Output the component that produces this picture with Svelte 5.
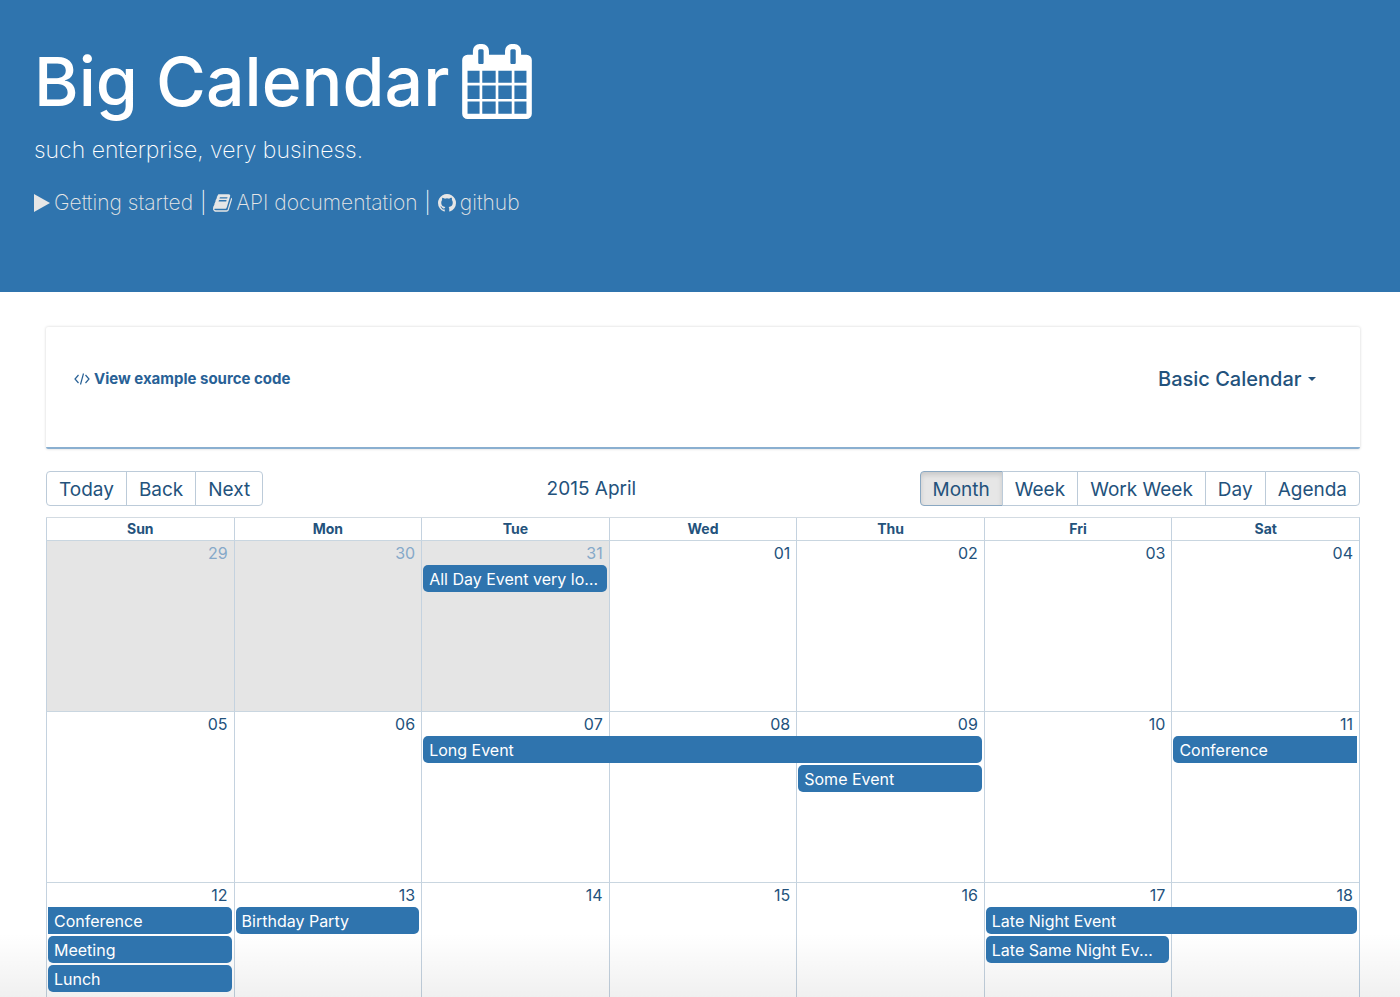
<script>
  const dayNames = ['Sun', 'Mon', 'Tue', 'Wed', 'Thu', 'Fri', 'Sat'];
  const views = ['Month', 'Week', 'Work Week', 'Day', 'Agenda'];
  let view = $state('Month');

  // Each day lists its event slots from the top; null keeps a slot free
  // for an event that runs over from an earlier day.
  const weeks = [
    [
      { date: '29', off: true },
      { date: '30', off: true },
      { date: '31', off: true, slots: [{ title: 'All Day Event very long title', span: 1 }] },
      { date: '01' },
      { date: '02' },
      { date: '03' },
      { date: '04' }
    ],
    [
      { date: '05' },
      { date: '06' },
      { date: '07', slots: [{ title: 'Long Event', span: 3 }] },
      { date: '08' },
      { date: '09', slots: [null, { title: 'Some Event', span: 1 }] },
      { date: '10' },
      { date: '11', slots: [{ title: 'Conference', span: 1, after: true }] }
    ],
    [
      {
        date: '12',
        slots: [
          { title: 'Conference', span: 1, prior: true },
          { title: 'Meeting', span: 1 },
          { title: 'Lunch', span: 1 }
        ],
        more: 2
      },
      { date: '13', slots: [{ title: 'Birthday Party', span: 1 }] },
      { date: '14' },
      { date: '15' },
      { date: '16' },
      {
        date: '17',
        slots: [
          { title: 'Late Night Event', span: 2 },
          { title: 'Late Same Night Event', span: 1 }
        ]
      },
      { date: '18' }
    ]
  ];
</script>

<div class="page">
  <header class="banner">
    <h1>
      Big Calendar
      <svg class="logo" viewBox="64 0 1664 1792" aria-hidden="true"><path d="M192 1664h288v-288h-288v288zM544 1664h320v-288h-320v288zM192 1312h288v-320h-288v320zM544 1312h320v-320h-320v320zM192 928h288v-288h-288v288zM928 1664h320v-288h-320v288zM544 928h320v-288h-320v288zM1312 1664h288v-288h-288v288zM928 1312h320v-320h-320v320zM576 448v-288q0-13-9.500-22.500t-22.500-9.500h-64q-13 0-22.500 9.500t-9.500 22.500v288q0 13 9.500 22.500t22.500 9.500h64q13 0 22.500-9.500t9.500-22.500zM1312 1312h288v-320h-288v320zM928 928h320v-288h-320v288zM1312 928h288v-288h-288v288zM1344 448v-288q0-13-9.500-22.500t-22.500-9.500h-64q-13 0-22.500 9.500t-9.500 22.500v288q0 13 9.500 22.500t22.500 9.500h64q13 0 22.500-9.500t9.500-22.500zM1728 384v1280q0 52-38 90t-90 38h-1408q-52 0-90-38t-38-90v-1280q0-52 38-90t90-38h128v-96q0-66 47-113t113-47h64q66 0 113 47t47 113v96h384v-96q0-66 47-113t113-47h64q66 0 113 47t47 113v96h128q52 0 90 38t38 90z" /></svg>
    </h1>
    <p class="tagline">such enterprise, very business.</p>
    <nav class="links">
      <a href="#getting-started">
        <svg class="play" viewBox="0 0 16 20" aria-hidden="true"><path d="M0 1v18l16-9z" /></svg>
        Getting started
      </a>
      <span class="bar">|</span>
      <a href="#api">
        <svg class="book" viewBox="64 128 1664 1536" aria-hidden="true"><path d="M1703 478q40 57 18 129l-275 906q-19 64-76.500 107.500t-122.500 43.500h-923q-77 0-148.500-53.500t-99.500-131.500q-24-67-2-127 0-4 3-27t4-37q1-8-3-21.500t-3-19.500q2-11 8-21t16.500-23.500 16.500-23.500q23-38 45-91.500t30-91.500q3-10 .5-30t-.5-28q3-11 17-28t17-23q21-36 42-92t25-90q1-9-2.500-32t.5-28q4-13 22-30.500t22-22.500q19-26 42.500-84.500t27.500-96.500q1-8-3-25.500t-2-26.500q2-8 9-18t18-23 17-21q8-12 16.500-30.500t15-35 16-36 19.500-32 26.500-23.500 36-11.500 47.500 5.500l-1 3q38-9 51-9h761q74 0 114 56t18 130l-274 906q-36 119-71.500 153.500t-128.500 34.500h-869q-27 0-38 15-11 16-1 43 24 70 144 70h923q29 0 56-15.500t35-41.500l300-987q7-22 5-57 38 15 59 43zm-1064 2q-4 13 2 22.500t20 9.500h608q13 0 25.500-9.500t16.500-22.500l21-64q4-13-2-22.500t-20-9.500h-608q-13 0-25.500 9.500t-16.500 22.500zm-83 256q-4 13 2 22.500t20 9.500h608q13 0 25.500-9.500t16.500-22.500l21-64q4-13-2-22.500t-20-9.500h-608q-13 0-25.500 9.500t-16.500 22.500z" /></svg>
        API documentation
      </a>
      <span class="bar">|</span>
      <a href="#github">
        <svg class="github" viewBox="128 128 1536 1536" aria-hidden="true"><path d="M896 128q209 0 385.500 103t279.500 279.500 103 385.500q0 251-146.500 451.500t-378.500 277.500q-27 5-40-7t-13-30q0-3 .5-76.500t.5-134.500q0-97-52-142 57-6 102.500-18t94-39 81-66.500 53-105 20.500-150.500q0-119-79-206 37-91-8-204-28-9-81 11t-92 44l-38 24q-93-26-192-26t-192 26q-16-11-42.500-27t-83.500-38.500-85-13.500q-45 113-8 204-79 87-79 206 0 85 20.500 150t52.500 105 80.500 67 94 39 102.500 18q-39 36-49 103-21 10-45 15t-57 5-65.500-21.500-55.500-62.500q-19-32-48.500-52t-49.500-24l-20-3q-21 0-29 4.500t-5 11.500 9 14 13 12l7 5q22 10 43.500 38t31.500 51l10 23q13 38 44 61.500t67 30 69.500 7 55.500-3.500l23-4q0 38 .5 88.500t.5 54.500q0 18-13 30t-40 7q-232-77-378.500-277.500t-146.500-451.500q0-209 103-385.500t279.500-279.500 385.500-103z" /></svg>
        github
      </a>
    </nav>
  </header>

  <main>
    <section class="card">
      <a class="source" href="#source">
        <svg viewBox="0 0 16 12" aria-hidden="true"><path d="M4.500 2 1 6l3.500 4M11.500 2 15 6l-3.500 4M9.500 .5l-3 11" /></svg>
        View example source code
      </a>
      <label class="picker">
        <select aria-label="Example">
          <option>Basic Calendar</option>
        </select>
        <svg viewBox="0 0 8 4" aria-hidden="true"><path d="M0 0h8L4 4z" /></svg>
      </label>
    </section>

    <div class="toolbar">
      <div class="group">
        <button type="button">Today</button>
        <button type="button">Back</button>
        <button type="button">Next</button>
      </div>
      <span class="label">2015 April</span>
      <div class="group">
        {#each views as name}
          <button type="button" class:active={view === name} aria-pressed={view === name} onclick={() => (view = name)}>{name}</button>
        {/each}
      </div>
    </div>

    <table>
      <thead>
        <tr>
          {#each dayNames as name}<th scope="col">{name}</th>{/each}
        </tr>
      </thead>
      <tbody>
        {#each weeks as week}
          <tr>
            {#each week as day}
              <td class:off={day.off}>
                <a class="date" href="#day">{day.date}</a>
                {#each day.slots ?? [] as event}
                  {#if event}
                    <button
                      type="button"
                      class="event"
                      class:prior={event.prior}
                      class:after={event.after}
                      style="width: calc({event.span * 100}% - {4 - event.span}px)"
                    >{event.title}</button>
                  {:else}
                    <div class="slot"></div>
                  {/if}
                {/each}
                {#if day.more}<a class="more" href="#more">+{day.more} more</a>{/if}
              </td>
            {/each}
          </tr>
        {/each}
      </tbody>
    </table>
  </main>
  <div class="fade"></div>
</div>

<style>
  :global(body) {
    margin: 0;
    background: #fff;
  }
  .page {
    position: relative;
    height: 100vh;
    overflow: hidden;
    font-family: Inter, 'Liberation Sans', sans-serif;
    font-size: 16px;
    color: #23527c;
  }
  a {
    color: inherit;
    text-decoration: none;
  }
  button,
  select {
    font: inherit;
    color: inherit;
    cursor: pointer;
  }
  .banner {
    box-sizing: border-box;
    min-height: 292px;
    padding: 39px 34px;
    background: #2f74ae;
    color: #fff;
  }
  .banner svg {
    fill: currentColor;
  }
  h1 {
    display: flex;
    align-items: center;
    gap: 13px;
    margin: 0;
    font-size: 68px;
    line-height: 84px;
    font-weight: 500;
  }
  .logo {
    width: 70px;
    height: 75px;
  }
  .tagline {
    margin: 9px 0 0;
    font-size: 23px;
    line-height: 36px;
    font-weight: 200;
  }
  .links {
    display: flex;
    align-items: center;
    gap: 7px;
    margin-top: 19px;
    font-size: 21px;
    line-height: 32px;
    font-weight: 200;
  }
  .links a {
    display: flex;
    align-items: center;
    gap: 4px;
    color: #e6e6e6;
  }
  .play {
    width: 16px;
    height: 20px;
  }
  .book {
    width: 19px;
    height: 18px;
  }
  .github {
    width: 18px;
    height: 18px;
  }
  main {
    padding: 35px 40px 0 46px;
  }
  .card {
    display: flex;
    align-items: center;
    justify-content: space-between;
    box-sizing: border-box;
    min-height: 122px;
    padding: 0 44px 16px 28px;
    border-bottom: 2px solid #8aafd0;
    border-radius: 2px;
    box-shadow: 0 0 3px rgba(0, 0, 0, 0.18);
  }
  .source {
    display: flex;
    align-items: center;
    gap: 4px;
    font-size: 15px;
    line-height: 20px;
    font-weight: 700;
    color: #286196;
  }
  .source svg {
    width: 16px;
    height: 12px;
    fill: none;
    stroke: currentColor;
    stroke-width: 1.2;
  }
  .picker {
    display: flex;
    align-items: center;
    gap: 6px;
  }
  .picker select {
    appearance: none;
    padding: 0;
    border: 0;
    background: none;
    font-size: 20px;
    line-height: 28px;
    font-weight: 500;
  }
  .picker svg {
    width: 8px;
    height: 4px;
    fill: currentColor;
  }
  .toolbar {
    display: flex;
    align-items: center;
    margin: 22px 0 11px;
    font-size: 19px;
  }
  .label {
    flex: 1;
    text-align: center;
  }
  .group {
    display: flex;
  }
  .group button {
    height: 35px;
    padding: 1px 12px 0;
    border: 1px solid #bccbd9;
    background: #fff;
  }
  .group button + button {
    margin-left: -1px;
  }
  .group button:first-child {
    border-radius: 4px 0 0 4px;
  }
  .group button:last-child {
    border-radius: 0 4px 4px 0;
  }
  .group button.active {
    border-color: #8aa8c2;
    background: #e6e6e6;
    box-shadow: inset 0 3px 5px rgba(0, 0, 0, 0.125);
  }
  table {
    width: 100%;
    table-layout: fixed;
    border-collapse: separate;
    border-spacing: 0;
    border-top: 1px solid #d3dbe2;
    border-right: 1px solid #bccfe0;
  }
  th,
  td {
    box-sizing: border-box;
    padding: 0;
    border-left: 1px solid #c4d2df;
  }
  th {
    height: 22px;
    font-size: 14px;
    line-height: 22px;
    font-weight: 700;
  }
  td {
    height: 171px;
    border-top: 1px solid #c9d6e0;
    vertical-align: top;
  }
  .off {
    background: #e5e5e5;
  }
  .date {
    display: block;
    padding-right: 6px;
    line-height: 24px;
    text-align: right;
  }
  .off .date {
    color: #86a9c9;
  }
  .event,
  .slot {
    display: block;
    height: 27px;
    margin: 0 0 2px 1px;
  }
  .event {
    position: relative;
    z-index: 1;
    padding: 0 8px 0 6px;
    border: 0;
    border-radius: 5px;
    background: #2f74ae;
    color: #fff;
    text-align: left;
    white-space: nowrap;
    overflow: hidden;
    text-overflow: ellipsis;
  }
  .prior {
    border-top-left-radius: 0;
    border-bottom-left-radius: 0;
  }
  .after {
    border-top-right-radius: 0;
    border-bottom-right-radius: 0;
  }
  .more {
    display: block;
    padding-left: 6px;
    font-size: 14px;
    line-height: 17px;
    font-weight: 700;
  }
  .fade {
    position: absolute;
    inset: auto 0 0;
    height: 64px;
    background: linear-gradient(rgba(0, 0, 0, 0), rgba(0, 0, 0, 0.06));
    pointer-events: none;
  }
</style>
